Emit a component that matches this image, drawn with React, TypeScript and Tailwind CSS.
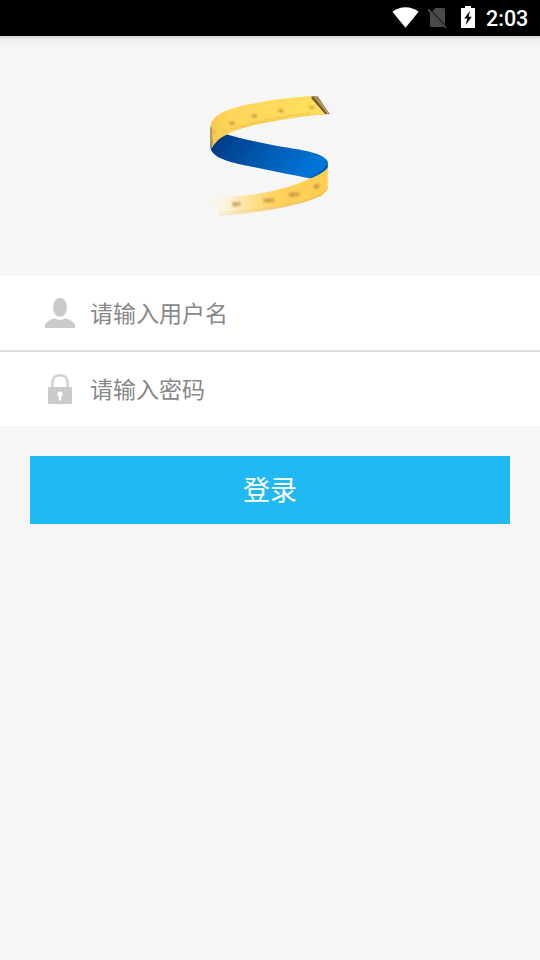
import type { ReactNode } from "react";

function StatusBar() {
  return (
    <header className="flex h-9 shrink-0 items-start bg-black pl-[392px] text-white">
      <svg className="mt-[7px] h-[21px] w-[27px]" viewBox="0 0 27 21" fill="#fff">
        <path d="M.4 4.8C7.5-1.4 19.5-1.4 26.6 4.8L13.5 20.8Z" />
      </svg>
      <svg className="ml-[8px] mt-[7px] h-[22px] w-[21px]" viewBox="0 0 21 22">
        <path d="M8.4 1H16.4C17.4 1 18 1.6 18 2.6V17.6L5.2 4.2Z" fill="#4a4a4a" />
        <path d="M3 5.6L16.9 20H4.6C3.6 20 3 19.4 3 18.4Z" fill="#4a4a4a" />
        <path d="M1.2 2.4L19 20.7" stroke="#555" strokeWidth="1.6" />
      </svg>
      <svg className="ml-[13px] mt-[6px] h-[22px] w-[14px]" viewBox="0 0 14 22">
        <path d="M4 0H10V2H14V22H0V2H4Z" fill="#fff" />
        <path d="M9 5L3.2 12.6H6.2L4.8 19L10.8 10.8H7.6Z" fill="#000" />
      </svg>
      <time className="ml-[11px] mt-[6px] font-[Roboto,sans-serif] text-[21.5px] font-medium leading-[25px]">2:03</time>
    </header>
  );
}

function Logo() {
  return (
    <svg className="h-[120px] w-[120px] overflow-visible" viewBox="30 30 360 360">
      <defs>
        <linearGradient id="top" x1="0" x2="1">
          <stop offset="0" stopColor="#f4c94e" />
          <stop offset=".15" stopColor="#ffd45c" />
          <stop offset="1" stopColor="#ffe25a" />
        </linearGradient>
        <linearGradient id="blue" x1="0" y1="0" x2="1" y2=".3">
          <stop offset="0" stopColor="#002f70" />
          <stop offset=".15" stopColor="#003f8c" />
          <stop offset=".6" stopColor="#005db4" />
          <stop offset="1" stopColor="#0074d8" />
        </linearGradient>
        <linearGradient id="bottom" x1="0" x2="1">
          <stop offset="0" stopColor="#fff2d6" stopOpacity=".1" />
          <stop offset=".25" stopColor="#ffe7a8" />
          <stop offset=".55" stopColor="#ffd25c" />
          <stop offset="1" stopColor="#ffce50" />
        </linearGradient>
        <linearGradient id="edge" x1="0" x2="1">
          <stop offset="0" stopColor="#f0cf94" stopOpacity=".5" />
          <stop offset="1" stopColor="#efb848" />
        </linearGradient>
        <filter id="soft" x="-5%" y="-5%" width="110%" height="110%">
          <feGaussianBlur stdDeviation="2.2" />
        </filter>
        <filter id="faded" x="-5%" y="-5%" width="110%" height="110%">
          <feGaussianBlur stdDeviation="2.8" />
        </filter>
      </defs>
      <g filter="url(#soft)">
        <path d="M31 165C45 148 62 142 84 146C132 160 190 172 255 184C314 193 369 202 383 226V246C376 264 354 276 326 277C276 266 220 256 160 243C100 231 40 218 32 188Z" fill="url(#blue)" />
        <path d="M326 277C357 263 378 248 383 226V246C376 265 356 276 326 277Z" fill="#0056b3" />
        <path d="M32 118C40 82 91 67 147 55C215 41 275 34 338 30L386 84C323 87 247 99 178 114C130 124 98 135 78 147C58 157 46 168 36 186C31 166 31 138 32 118Z" fill="url(#top)" />
        <path d="M30 124C30 150 30 172 33 190L39 174C37 160 36 145 35 124Z" fill="#a79968" />
        <path d="M48 163C75 141 121 124 178 112C247 98 323 86 383 83" fill="none" stroke="#f3cb50" strokeWidth="3" />
        <path d="M63 142L72 134L80 135L93 127L103 128L116 120L131 121L143 114L159 112L171 106L189 106L201 99L218 99L232 94L249 94L263 89L283 88L298 84L316 83L330 80" fill="none" stroke="#e9c150" strokeWidth="3" />
        <path d="M334 31H353L389 84H378Z" fill="#8d763f" />
        <path d="M335 34L378 83" stroke="#6c5634" strokeWidth="5" />
        <path d="M346 32L384 82" stroke="#c1a970" strokeWidth="4" />
        <path d="M40 335C130 333 230 320 313 285C353 269 377 257 383 243V304C382 328 334 343 270 358C202 373 128 382 58 388L40 362Z" fill="url(#bottom)" />
        <path d="M56 387C145 382 218 371 284 355C341 341 377 325 383 303" fill="none" stroke="url(#edge)" strokeWidth="3" />
        <path d="M57 378L71 381L82 376L101 379L119 374L138 375L158 370L177 372L198 365L216 367L238 360L257 359L275 351L297 350L316 342L334 340L350 330L367 327" fill="none" stroke="url(#edge)" strokeWidth="3" />
      </g>
      <g filter="url(#faded)" fill="none" stroke="#b27c36" strokeOpacity=".75" strokeWidth="5" strokeLinecap="round">
        <path d="M89 112L95 109L101 112L94 115M157 88L165 87L161 92L168 93M237 74L247 71L242 76L249 78M330 62L334 67L342 64M40 135L43 141" />
        <path d="M98 351H106L101 358H107M111 351V358M118 349V358M193 340V348M200 340H207V347H200ZM213 339H219V346H213M269 323V330M275 322H282V329H275ZM288 321H296M288 328H296M344 299L350 298V305H344ZM356 298V304" />
      </g>
    </svg>
  );
}

function UserIcon() {
  return (
    <svg className="h-[30px] w-[30px]" viewBox="0 0 30 30" fill="#cbcbcb">
      <ellipse cx="15" cy="9.4" rx="7" ry="9.6" />
      <path d="M0 30V26.6C1.5 23.8 5.5 21.4 9.6 20.2C13 22.3 17 22.3 20.4 20.2C24.5 21.4 28.5 23.8 30 26.6V30Z" />
    </svg>
  );
}

function LockIcon() {
  return (
    <svg className="h-[30px] w-[30px]" viewBox="0 0 30 30">
      <path d="M7.3 14V9C7.3 4.3 10.2 1.3 15 1.3S22.7 4.3 22.7 9V14" fill="none" stroke="#d2d2d2" strokeWidth="2.6" />
      <path d="M3 13H27V30H3Z" fill="#cbcbcb" />
      <path d="M15 17.5A2.8 2.8 0 0 0 13.8 22.8V26.5H16.2V22.8A2.8 2.8 0 0 0 15 17.5Z" fill="#fff" />
    </svg>
  );
}

function Field({ icon, type, placeholder }: { icon: ReactNode; type: string; placeholder: string }) {
  return (
    <label className="flex h-[74px] items-center gap-[15px] bg-white pl-[45px]">
      {icon}
      <input
        type={type}
        placeholder={placeholder}
        className="h-10 min-w-0 flex-1 bg-transparent pb-[2px] text-[23px] text-[#333] outline-none placeholder:text-[#888]"
      />
    </label>
  );
}

export default function App() {
  return (
    <div className="flex h-[960px] w-[540px] flex-col bg-[#f6f6f6] font-['Noto_Sans_CJK_SC',sans-serif]">
      <StatusBar />
      <div className="h-3 shrink-0 bg-linear-to-b from-[#d4d4d4] via-[#efefef] via-30% to-[#f6f6f6]" />
      <div className="flex h-[228px] shrink-0 justify-center pt-12">
        <Logo />
      </div>
      <form>
        <div className="flex flex-col gap-[2px] bg-[#dfdfdf]">
          <Field icon={<UserIcon />} type="text" placeholder="请输入用户名" />
          <Field icon={<LockIcon />} type="password" placeholder="请输入密码" />
        </div>
        <div className="px-[30px] pt-[30px]">
          <button type="button" className="h-[68px] w-full bg-[#20b9f4] pb-[2px] text-[27px] text-white">
            登录
          </button>
        </div>
      </form>
    </div>
  );
}
